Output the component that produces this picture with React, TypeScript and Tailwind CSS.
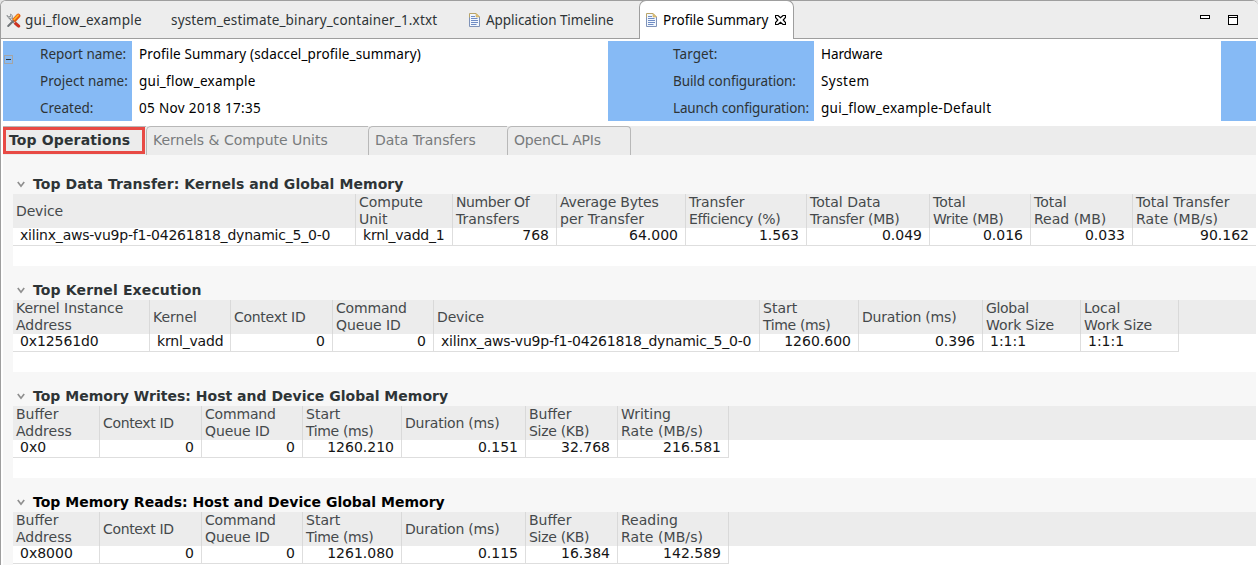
import React from "react";

type Column = {
  lines: [string, string?][];
  width: string;
  value: string;
  valueTrack?: string;
  left?: boolean;
};

type Section = {
  title: string;
  titleClass: string;
  columns: Column[];
  fullWidth?: boolean;
};

const device = "xilinx_aws-vu9p-f1-04261818_dynamic_5_0-0";

const bufferColumns = (
  address: string,
  start: string,
  duration: string,
  size: string,
  rateTitle: string,
  rate: string,
): Column[] => [
  { lines: [["Buffer"], ["Address"]], width: "w-[87px]", value: address, left: true },
  { lines: [["Context ID", "tracking-[-0.34px]"]], width: "w-[102px]", value: "0" },
  {
    lines: [["Command", "tracking-[-0.18px]"], ["Queue ID", "tracking-[-0.08px]"]],
    width: "w-[101px]",
    value: "0",
  },
  { lines: [["Start"], ["Time (ms)", "tracking-[-0.36px]"]], width: "w-[99px]", value: start },
  { lines: [["Duration (ms)", "tracking-[-0.21px]"]], width: "w-[124px]", value: duration },
  { lines: [["Buffer"], ["Size (KB)", "tracking-[-0.3px]"]], width: "w-[92px]", value: size },
  { lines: [[rateTitle], ["Rate (MB/s)", "tracking-[0.08px]"]], width: "w-[111px]", value: rate },
];

const sections: Section[] = [
  {
    title: "Top Data Transfer: Kernels and Global Memory",
    titleClass: "tracking-[0.07px] text-[#2e3436]",
    fullWidth: true,
    columns: [
      { lines: [["Device", "tracking-[-0.14px]"]], width: "w-[343px]", value: device, valueTrack: "tracking-[-0.21px]", left: true },
      { lines: [["Compute"], ["Unit"]], width: "w-[97px]", value: "krnl_vadd_1", valueTrack: "tracking-[-0.23px]", left: true },
      { lines: [["Number Of", "tracking-[-0.37px]"], ["Transfers"]], width: "w-[104px]", value: "768" },
      { lines: [["Average Bytes", "tracking-[-0.2px]"], ["per Transfer"]], width: "w-[129px]", value: "64.000" },
      { lines: [["Transfer", "tracking-[-0.1px]"], ["Efficiency (%)", "tracking-[-0.36px]"]], width: "w-[121px]", value: "1.563" },
      { lines: [["Total Data"], ["Transfer (MB)", "tracking-[-0.3px]"]], width: "w-[123px]", value: "0.049" },
      { lines: [["Total"], ["Write (MB)", "tracking-[-0.38px]"]], width: "w-[101px]", value: "0.016" },
      { lines: [["Total"], ["Read (MB)"]], width: "w-[102px]", value: "0.033" },
      { lines: [["Total Transfer"], ["Rate (MB/s)", "tracking-[0.08px]"]], width: "w-[123px]", value: "90.162" },
    ],
  },
  {
    title: "Top Kernel Execution",
    titleClass: "tracking-[0.14px] text-[#2e3436]",
    columns: [
      { lines: [["Kernel Instance", "tracking-[-0.05px]"], ["Address"]], width: "w-[137px]", value: "0x12561d0", valueTrack: "tracking-[-0.1px]", left: true },
      { lines: [["Kernel"]], width: "w-[81px]", value: "krnl_vadd", valueTrack: "tracking-[-0.18px]", left: true },
      { lines: [["Context ID", "tracking-[-0.28px]"]], width: "w-[102px]", value: "0" },
      { lines: [["Command", "tracking-[-0.18px]"], ["Queue ID", "tracking-[-0.08px]"]], width: "w-[101px]", value: "0" },
      { lines: [["Device", "tracking-[-0.14px]"]], width: "w-[326px]", value: device, valueTrack: "tracking-[-0.21px]", left: true },
      { lines: [["Start"], ["Time (ms)", "tracking-[-0.36px]"]], width: "w-[99px]", value: "1260.600" },
      { lines: [["Duration (ms)", "tracking-[-0.21px]"]], width: "w-[124px]", value: "0.396" },
      { lines: [["Global", "tracking-[-0.32px]"], ["Work Size", "tracking-[-0.06px]"]], width: "w-[98px]", value: "1:1:1", left: true },
      { lines: [["Local"], ["Work Size", "tracking-[-0.06px]"]], width: "w-[98px]", value: "1:1:1", left: true },
    ],
  },
  {
    title: "Top Memory Writes: Host and Device Global Memory",
    titleClass: "tracking-[0.01px] text-[#2e3436]",
    columns: bufferColumns("0x0", "1260.210", "0.151", "32.768", "Writing", "216.581"),
  },
  {
    title: "Top Memory Reads: Host and Device Global Memory",
    titleClass: "tracking-[0.01px] text-black",
    columns: bufferColumns("0x8000", "1261.080", "0.115", "16.384", "Reading", "142.589"),
  },
];

function ToolsIcon() {
  return (
    <svg width="15" height="15" viewBox="0 0 15 15" fill="none">
      <path d="M4 4.6 L12 12.6" stroke="#7f8487" strokeWidth="3" strokeLinecap="round" />
      <path d="M4 4.6 L12 12.6" stroke="#e9ebec" strokeWidth="1.4" strokeLinecap="round" />
      <path d="M1 2.2 L2.8 4 L4.6 3.6 L4.6 1 A3.2 3.2 0 0 1 6.4 4.8 A3.4 3.4 0 0 1 1 2.2Z" fill="#dfe1e2" stroke="#85898b" strokeWidth="0.8" />
      <path d="M12.3 2.8 L8.6 6.8" stroke="#e4560f" strokeWidth="4.2" strokeLinecap="round" />
      <path d="M12 2.3 L8.2 6.3" stroke="#ffae22" strokeWidth="1.9" strokeLinecap="round" />
      <path d="M7 8.2 L2.2 13" stroke="#6f7477" strokeWidth="2" strokeLinecap="round" />
      <path d="M9.6 10.6 L12.8 13.2" stroke="#d0301f" strokeWidth="2.8" strokeLinecap="round" />
    </svg>
  );
}

function DocumentIcon() {
  return (
    <svg width="11" height="14" viewBox="0 0 11 14" fill="none">
      <path d="M0.5 0.5 H7 L10.5 4 V13.5 H0.5Z" fill="#f2f7fd" />
      <path d="M0.5 5 V0.5 H7 L10.5 4" stroke="#b9a468" />
      <path d="M0.5 4.5 V13.5 H10.5 V4" stroke="#7f93b8" />
      <path d="M7 0.5 V4 H10.5Z" fill="#e3c477" stroke="#c9ac62" strokeWidth="0.6" />
      <path d="M2 3.5 H6 M2 5.5 H8.5 M2 7.5 H9 M2 9.5 H9 M2 11.5 H7.5" stroke="#6f8cc4" />
    </svg>
  );
}

function CloseIcon() {
  return (
    <svg width="11" height="10" viewBox="0 0 11 10" fill="#fff" stroke="#000" strokeWidth="1.15">
      <path d="M0.5 0.5 H3 L5.5 2.7 L8 0.5 H10.5 V2.5 L8.2 5 L10.5 7.5 V9.5 H8 L5.5 7.3 L3 9.5 H0.5 V7.5 L2.8 5 L0.5 2.5Z" />
    </svg>
  );
}

function EditorTabs() {
  return (
    <div className="flex h-[38px] w-full items-start border-b border-[#9e9e9e] bg-[#ededed] text-[13.5px] leading-[38px] text-[#2e3436]">
      <div className="flex w-[170px] items-center pl-[5px]">
        <ToolsIcon />
        <span className="pl-[4px] tracking-[0.25px]">gui_flow_example</span>
      </div>
      <div className="w-[297px] tracking-[0.16px]">system_estimate_binary_container_1.xtxt</div>
      <div className="flex w-[171px] items-center pl-px">
        <DocumentIcon />
        <span className="pl-[6px] tracking-[-0.06px]">Application Timeline</span>
      </div>
      <div className="-mt-px flex h-[39px] w-[155px] items-center rounded-t-[7px] border border-b-0 border-[#9e9e9e] bg-white pl-[6px] text-black">
        <DocumentIcon />
        <span className="w-[118px] pl-[6px]">Profile Summary</span>
        <CloseIcon />
      </div>
      <div className="ml-auto flex items-start gap-[18px] pt-[14px] pr-[20px]">
        <div className="h-[4px] w-[10px] border border-black bg-white" />
        <div className="h-[10px] w-[10px] border border-black bg-white pt-px">
          <div className="h-px bg-black" />
        </div>
      </div>
    </div>
  );
}

function ReportHeader() {
  return (
    <div className="flex h-[80px] text-[13.5px] leading-[27px] whitespace-nowrap">
      <div className="flex h-[80px] w-[129px] bg-[#86baf5] text-[#2e3436]">
        <div className="mt-[14px] ml-px flex h-[9px] w-[9px] items-center justify-center border border-[#a5a5a5]">
          <div className="h-px w-[5px] bg-[#2e3436]" />
        </div>
        <div className="pl-[27px]">
          <div>Report name:</div>
          <div className="tracking-[0.04px]">Project name:</div>
          <div>Created:</div>
        </div>
      </div>
      <div className="w-[476px] pl-[7px] text-black">
        <div className="tracking-[0.13px]">Profile Summary (sdaccel_profile_summary)</div>
        <div className="tracking-[0.24px]">gui_flow_example</div>
        <div className="tracking-[0.34px]">05 Nov 2018 17:35</div>
      </div>
      <div className="h-[80px] w-[206px] bg-[#86baf5] pl-[65px] text-[#2e3436]">
        <div className="tracking-[0.08px]">Target:</div>
        <div className="tracking-[-0.11px]">Build configuration:</div>
        <div className="tracking-[-0.14px]">Launch configuration:</div>
      </div>
      <div className="w-[407px] pl-[7px] text-black">
        <div className="tracking-[-0.1px]">Hardware</div>
        <div className="tracking-[0.45px]">System</div>
        <div className="tracking-[0.28px]">gui_flow_example-Default</div>
      </div>
      <div className="h-[80px] w-[35px] bg-[#86baf5]" />
    </div>
  );
}

const tabShape = "h-[29px] rounded-tl-[5px] border-t border-l border-[#b8b8b8] pl-[6px]";

function ReportTabs() {
  return (
    <div className="mt-[5px] flex h-[29px] bg-[#ececec] font-['DejaVu_Sans',sans-serif] text-[14px] leading-[27px] text-[#787b7c]">
      <div className="w-[143px] border-t border-[#b8b8b8]">
        <div className="h-[27px] w-[142px] border-[3px] border-[#e84a45] pl-[3px] leading-[20px] font-bold tracking-[0.14px] text-[#2e3436]">
          Top Operations
        </div>
      </div>
      <div className={`${tabShape} w-[222px] tracking-[-0.02px]`}>Kernels &amp; Compute Units</div>
      <div className={`${tabShape} w-[139px] tracking-[-0.05px]`}>Data Transfers</div>
      <div className={`${tabShape} w-[124px] rounded-tr-[4px] border-r tracking-[-0.18px]`}>OpenCL APIs</div>
    </div>
  );
}

function SectionTable({ section }: { section: Section }) {
  return (
    <section className="h-[106px] pl-[10px]">
      <h2 className={`flex h-[34px] items-end pb-px pl-[4px] text-[14px] leading-[17px] font-bold ${section.titleClass}`}>
        <svg className="mr-[8px] mb-[5px]" width="8" height="7" viewBox="0 0 8 7" fill="none" stroke="#8f8f8f" strokeWidth="1.7">
          <path d="M0.8 1 L4 5.2 L7.2 1" />
        </svg>
        {section.title}
      </h2>
      <div className="h-[72px] bg-white">
        <div className="flex bg-[#ececec]">
          {section.columns.map((column, i) => {
            const last = section.fullWidth && i === section.columns.length - 1;
            const edge = last ? "" : "border-r";
            return (
              <div key={i} className={`shrink-0 ${column.width}`}>
                <div className={`flex h-[34px] flex-col justify-center border-[#d9d9d9] pl-[3px] leading-[17px] text-[#45494b] ${edge}`}>
                  {column.lines.map(([text, track]) => (
                    <div key={text} className={track}>
                      {text}
                    </div>
                  ))}
                </div>
                <div
                  className={`h-[18px] border-b border-[#dedede] bg-white leading-[15px] text-[#141414] ${edge} ${
                    column.left ? "pl-[7px]" : "pr-[7px] text-right"
                  } ${column.valueTrack ?? ""}`}
                >
                  {column.value}
                </div>
              </div>
            );
          })}
          {!section.fullWidth && <div className="mt-[34px] h-[18px] flex-1 bg-white" />}
        </div>
      </div>
    </section>
  );
}

export default function App() {
  return (
    <div className="h-[565px] w-[1258px] overflow-hidden bg-[#e4e4e4] font-['Noto_Sans',sans-serif]">
      <div className="flex h-[565px] flex-col overflow-hidden rounded-t-[6px] border-t border-l border-[#9e9e9e] bg-white">
        <EditorTabs />
        <div className="flex-1 pt-[2px] pr-[2px] pl-[2px]">
          <ReportHeader />
          <ReportTabs />
          <main className="h-[412px] overflow-hidden bg-[#f7f7f7] pt-[5px] font-['DejaVu_Sans',sans-serif] text-[14px] whitespace-nowrap">
            {sections.map((section) => (
              <SectionTable key={section.title} section={section} />
            ))}
          </main>
        </div>
      </div>
    </div>
  );
}
